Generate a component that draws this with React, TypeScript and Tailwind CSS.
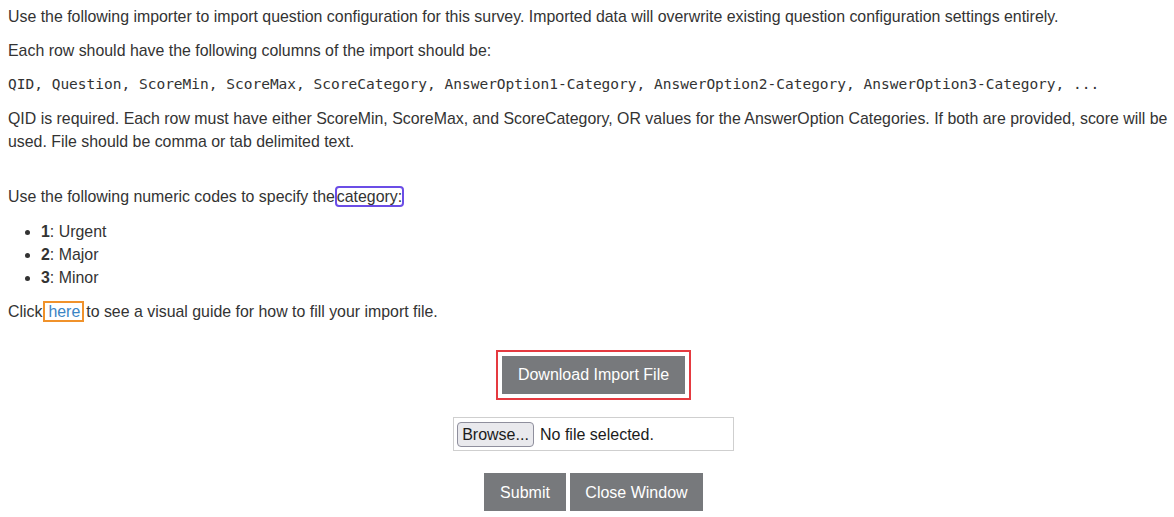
import React from 'react';

const sans = "font-['Liberation_Sans',Arial,sans-serif]";

export default function App() {
    const categories = [
        { code: '1', label: 'Urgent' },
        { code: '2', label: 'Major' },
        { code: '3', label: 'Minor' },
    ];

    return (
        <div className={`w-[1174px] h-[517px] overflow-hidden bg-white text-[#333] text-[15.9px] leading-[23px] ${sans}`}>
            <div className="w-[1187px] px-2 pt-[5px]">
                {/* Instructions */}
                <p className="mb-[11px]">
                    Use the following importer to import question configuration for this survey. Imported data will overwrite existing question configuration settings entirely.
                </p>
                <p className="mb-[11px]">Each row should have the following columns of the import should be:</p>
                <p className="mb-[11px] font-['DejaVu_Sans_Mono',monospace] text-[14.5px] whitespace-pre">
                    QID, Question, ScoreMin, ScoreMax, ScoreCategory, AnswerOption1-Category, AnswerOption2-Category, AnswerOption3-Category, ...
                </p>
                <p className="mb-[32px] w-[1163px]">
                    QID is required. Each row must have either ScoreMin, ScoreMax, and ScoreCategory, OR values for the AnswerOption Categories. If both are provided, score will be used. File should be comma or tab delimited text.
                </p>

                <p className="mb-[12px]">
                    Use the following numeric codes to specify the<span className="border-2 border-[#6b4de6] rounded-[4px]">category:</span>
                </p>
                <ul className="list-disc pl-[33px] mb-[11px]">
                    {categories.map((c) => (
                        <li key={c.code}>
                            <b>{c.code}</b>: {c.label}
                        </li>
                    ))}
                </ul>
                <p>
                    Click<span className="ml-[1px] border-2 border-[#f0922b] pl-[3px] pr-[2px] text-[#3a84c4]">here</span>
                    <span className="ml-[2px]">to see a visual guide for how to fill your import file.</span>
                </p>

                {/* Import controls */}
                <div className="flex flex-col items-center">
                    <div className="mt-[27px] border-2 border-[#e53a40] p-[4px]">
                        <button className="block h-[38px] w-[183px] bg-[#77797c] text-white text-[16px] leading-[22px]">
                            Download Import File
                        </button>
                    </div>

                    <div className="mt-[17px] w-[281px] h-[34px] border border-[#cfcfcf] bg-white flex items-center pl-[3px] gap-[6px] text-[16px]">
                        <span className="h-[25px] w-[77px] flex items-center justify-center rounded-[4px] border border-[#8f8f9d] bg-[#e9e9ed] text-[#1b1b1b]">
                            Browse...
                        </span>
                        <span className="text-[#1b1b1b]">No file selected.</span>
                    </div>

                    <div className="mt-[22px] flex gap-[4px]">
                        <button className="h-[38px] w-[82px] bg-[#77797c] text-white text-[16px]">Submit</button>
                        <button className="h-[38px] w-[133px] bg-[#77797c] text-white text-[16px]">Close Window</button>
                    </div>
                </div>
            </div>
        </div>
    );
}
